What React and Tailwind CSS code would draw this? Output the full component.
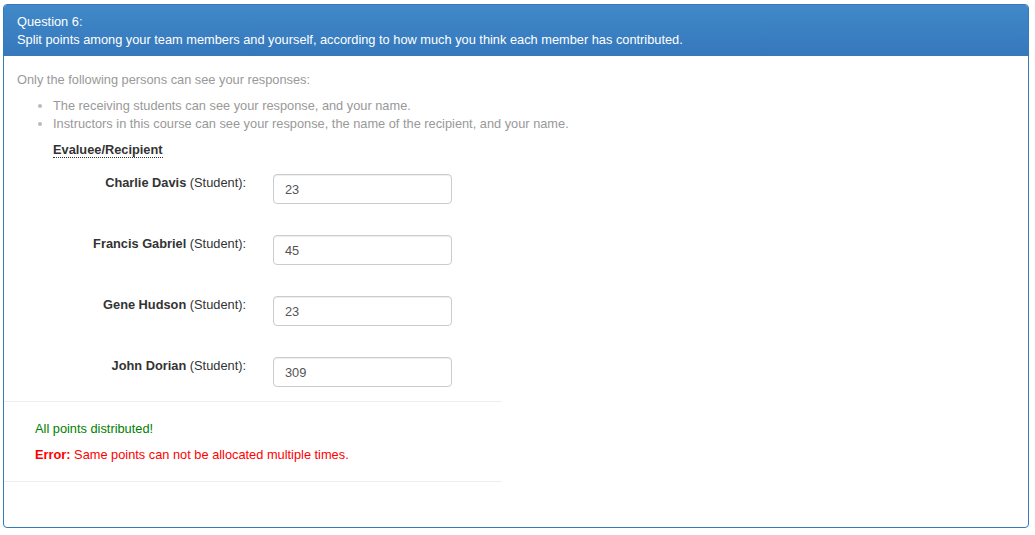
import React from 'react';

const members = [
  { name: 'Charlie Davis', points: '23' },
  { name: 'Francis Gabriel', points: '45' },
  { name: 'Gene Hudson', points: '23' },
  { name: 'John Dorian', points: '309' },
];

const App = () => {
  return (
    <div
      className="w-[1035px] h-[535px] bg-white pl-[3px] pt-[4px] text-[12.8px] leading-[18px] text-[#333]"
      style={{ fontFamily: '"Liberation Sans", Arial, sans-serif' }}
    >
      <div className="w-[1026px] h-[524px] border border-[#337ab7] rounded-[4px] overflow-hidden bg-white">
        {/* Heading */}
        <div className="h-[51px] bg-gradient-to-b from-[#4189c8] to-[#3578bc] text-white pl-[13px] pt-[8px]">
          <div>Question 6:</div>
          <div>Split points among your team members and yourself, according to how much you think each member has contributed.</div>
        </div>

        {/* Body */}
        <div className="pt-[15px] pl-[13px] text-[#999]">
          <div>Only the following persons can see your responses:</div>
          <ul className="mt-[8px] pl-[36px] list-disc marker:text-[#bbb]">
            <li>The receiving students can see your response, and your name.</li>
            <li>Instructors in this course can see your response, the name of the recipient, and your name.</li>
          </ul>
          <div className="mt-[8px] pl-[36px]">
            <span className="font-bold text-[#333] border-b border-dotted border-[#333]">Evaluee/Recipient</span>
          </div>

          <div className="mt-[15px] flex flex-col gap-[31px]">
            {members.map((m) => (
              <div key={m.name} className="flex items-start">
                <div className="w-[229px] text-right text-[#333]">
                  <span className="font-bold">{m.name}</span> (Student):
                </div>
                <div className="ml-[27px] w-[179px] h-[30px] border border-[#ccc] rounded-[4px] pl-[11px] pt-[2px] flex items-center text-[#555] shadow-[inset_0_1px_1px_rgba(0,0,0,0.075)]">
                  {m.points}
                </div>
              </div>
            ))}
          </div>
        </div>

        <div className="-ml-px mt-[14px] w-[499px] h-px bg-[#eee]" />

        <div className="pl-[31px]">
          <div className="mt-[18px] text-[#008000]">All points distributed!</div>
          <div className="mt-[8px] text-[#f00]">
            <span className="font-bold">Error:</span> Same points can not be allocated multiple times.
          </div>
        </div>

        <div className="-ml-px mt-[17px] w-[499px] h-px bg-[#eee]" />
      </div>
    </div>
  );
};

export default App;
